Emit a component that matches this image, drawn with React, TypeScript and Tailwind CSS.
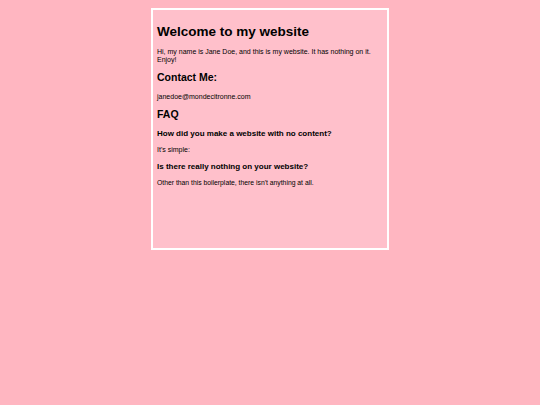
export default function App() {
  return (
    <main
      className="min-h-[405px] bg-[#ffb6c1] pt-2 text-black"
      style={{ fontFamily: '"Liberation Sans", Arial, sans-serif' }}
    >
      <div className="mx-auto h-[242px] w-[238px] border-2 border-white bg-[#ffc0cb] px-[4px] pt-[13px]">
        <h1 className="text-[13.5px] font-bold leading-[18px]">Welcome to my website</h1>
        <p className="mt-[7px] text-[7px] leading-[8px]">
          Hi, my name is Jane Doe, and this is my website. It has nothing on it. Enjoy!
        </p>
        <h2 className="mt-[6px] text-[10.5px] font-bold leading-[14px]">Contact Me:</h2>
        <p className="mt-[9px] text-[7px] leading-[8px]">janedoe@mondecitronne.com</p>
        <h2 className="mt-[6px] text-[10.5px] font-bold leading-[14px]">FAQ</h2>
        <h3 className="mt-[7px] text-[8px] font-bold leading-[11px]">
          How did you make a website with no content?
        </h3>
        <p className="mt-[7px] text-[7px] leading-[8px]">It's simple:</p>
        <h3 className="mt-[7px] text-[8px] font-bold leading-[11px]">
          Is there really nothing on your website?
        </h3>
        <p className="mt-[7px] text-[6.8px] leading-[8px]">
          Other than this boilerplate, there isn't anything at all.
        </p>
      </div>
    </main>
  );
}
